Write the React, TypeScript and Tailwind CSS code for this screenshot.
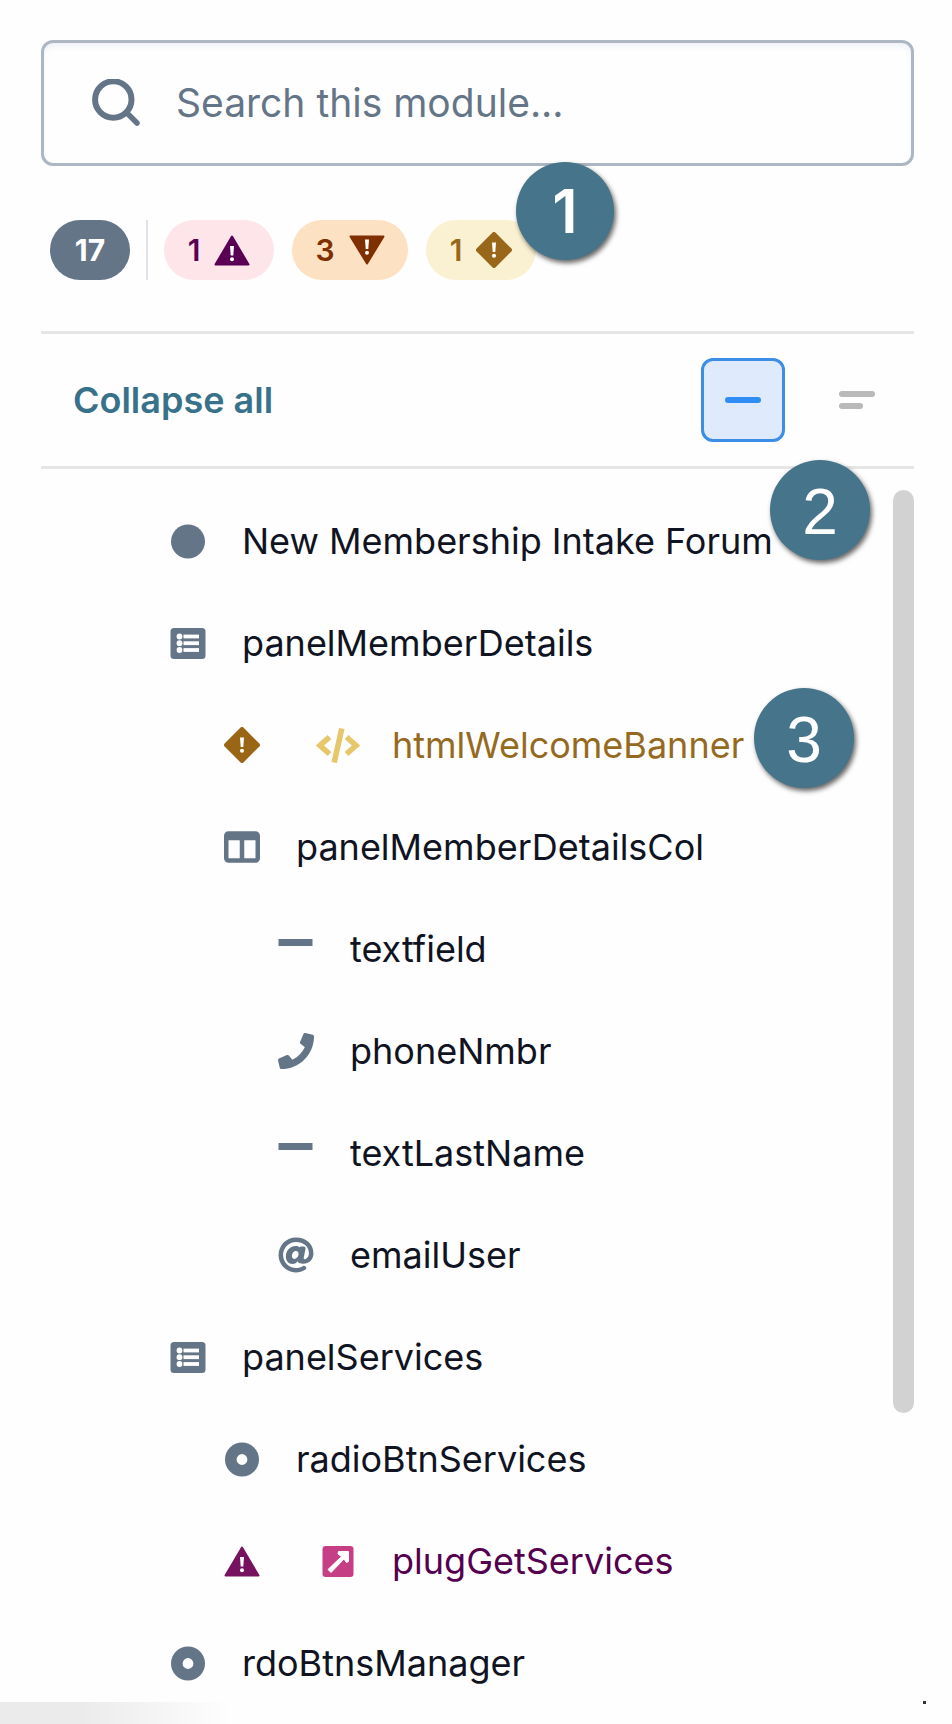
import React from "react";
import { FaAt, FaPhone } from "react-icons/fa";
import { FaTableColumns } from "react-icons/fa6";

type IconProps = { className?: string };

const Bang = ({ y = 0 }: { y?: number }) => (
  <g fill="#fff" transform={`translate(0 ${y})`}>
    <path d="M16 11h4l-.7 9.5h-2.6z" />
    <circle cx="18" cy="24.2" r="2" />
  </g>
);

const TriangleUp = ({ className }: IconProps) => (
  <svg viewBox="0 0 36 36" className={className} aria-hidden="true">
    <path
      d="M18 4.500 34.500 32.500H1.500z"
      fill="currentColor"
      stroke="currentColor"
      strokeWidth="2"
      strokeLinejoin="round"
    />
    <Bang y={3} />
  </svg>
);

const TriangleDown = ({ className }: IconProps) => (
  <svg viewBox="0 0 36 36" className={className} aria-hidden="true">
    <path
      d="M18 31.500 1.500 4.500h33z"
      fill="currentColor"
      stroke="currentColor"
      strokeWidth="2"
      strokeLinejoin="round"
    />
    <Bang y={-3.5} />
  </svg>
);

const Diamond = ({ className }: IconProps) => (
  <svg viewBox="0 0 36 36" className={className} aria-hidden="true">
    <path
      d="M18 2 34 18 18 34 2 18z"
      fill="currentColor"
      stroke="currentColor"
      strokeWidth="4"
      strokeLinejoin="round"
    />
    <Bang y={-0.5} />
  </svg>
);

const Disc = () => (
  <svg viewBox="0 0 36 36" className="size-9" aria-hidden="true">
    <circle cx="18" cy="18.500" r="17" fill="currentColor" />
  </svg>
);

const Radio = () => (
  <svg viewBox="0 0 36 36" className="size-9" aria-hidden="true">
    <circle cx="18" cy="18.500" r="11.200" fill="none" stroke="currentColor" strokeWidth="11.600" />
  </svg>
);

const Panel = () => (
  <svg viewBox="0 0 36 36" className="size-9" aria-hidden="true">
    <rect x="0.500" y="3" width="35" height="31" rx="3.500" fill="currentColor" />
    <g fill="#fff">
      <circle cx="9.500" cy="11.500" r="2.900" />
      <circle cx="9.500" cy="18.200" r="2.900" />
      <circle cx="9.500" cy="25" r="2.900" />
      <rect x="13.500" y="9.600" width="15.500" height="3.800" />
      <rect x="13.500" y="16.300" width="15.500" height="3.800" />
      <rect x="13.500" y="23.100" width="15.500" height="3.800" />
    </g>
  </svg>
);

const Dash = () => (
  <svg viewBox="0 0 36 36" className="size-9" aria-hidden="true">
    <rect x="0.500" y="8" width="34" height="7" fill="currentColor" />
  </svg>
);

const Code = () => (
  <svg viewBox="0 0 44 36" className="h-9 w-11" aria-hidden="true">
    <g fill="none" stroke="currentColor" strokeWidth="5.600">
      <path d="M13.500 10 4 18.500l9.500 8.500" />
      <path d="M30.500 10 40 18.500 30.500 27" />
      <path d="M25.800 1.500 18.200 35.500" />
    </g>
  </svg>
);

const Plug = () => (
  <svg viewBox="0 0 36 36" className="size-9" aria-hidden="true">
    <rect x="2.500" y="3" width="31" height="31" rx="3" fill="currentColor" />
    <path
      d="M18.500 8.500H28.500v10l-2 1-2.500-3.500L11 29.500 8 26.500 21.500 13.500 18 11z"
      fill="#fff"
      stroke="#fff"
      strokeLinejoin="round"
    />
  </svg>
);

type Tone = "plain" | "amber" | "plum";
type Item = {
  label: string;
  level: 0 | 1 | 2;
  icon: React.ReactNode;
  tone?: Tone;
  status?: React.ReactNode;
};

const items: Item[] = [
  { label: "New Membership Intake Forum", level: 0, icon: <Disc /> },
  { label: "panelMemberDetails", level: 0, icon: <Panel /> },
  {
    label: "htmlWelcomeBanner",
    level: 1,
    tone: "amber",
    icon: <Code />,
    status: <Diamond className="size-9 text-[#9a6514]" />,
  },
  { label: "panelMemberDetailsCol", level: 1, icon: <FaTableColumns className="size-9" /> },
  { label: "textfield", level: 2, icon: <Dash /> },
  { label: "phoneNmbr", level: 2, icon: <FaPhone className="size-9" /> },
  { label: "textLastName", level: 2, icon: <Dash /> },
  { label: "emailUser", level: 2, icon: <FaAt className="size-9" /> },
  { label: "panelServices", level: 0, icon: <Panel /> },
  { label: "radioBtnServices", level: 1, icon: <Radio /> },
  {
    label: "plugGetServices",
    level: 1,
    tone: "plum",
    icon: <Plug />,
    status: <TriangleUp className="size-9 text-[#76125f]" />,
  },
  { label: "rdoBtnsManager", level: 0, icon: <Radio /> },
];

const indent = ["pl-[129px]", "pl-[183px]", "pl-[237px]"];
const iconTone: Record<Tone, string> = {
  plain: "text-[#647587]",
  amber: "text-[#e6c76b]",
  plum: "text-[#c63f84]",
};
const textTone: Record<Tone, string> = {
  plain: "text-[#0f1322]",
  amber: "text-[#966a1e]",
  plum: "text-[#55004f]",
};

function TreeRow({ item }: { item: Item }) {
  const tone = item.tone ?? "plain";
  return (
    <li className={`flex h-[102px] items-center ${indent[item.level]}`}>
      {item.status && <span className="mr-[60px] shrink-0">{item.status}</span>}
      <span className={`mr-9 flex w-9 shrink-0 justify-center ${iconTone[tone]}`}>
        <span className="shrink-0">{item.icon}</span>
      </span>
      <span className={`text-4xl whitespace-nowrap ${textTone[tone]}`}>{item.label}</span>
    </li>
  );
}

function Callout({ n, className }: { n: number; className: string }) {
  return (
    <span
      className={`absolute flex items-center justify-center rounded-full bg-[#46748a] leading-none text-white shadow-[2px_3px_5px_rgba(0,0,0,0.6)] ${className}`}
    >
      {n}
    </span>
  );
}

function Badge({ count, className, children }: { count: number; className: string; children: React.ReactNode }) {
  return (
    <button
      type="button"
      className={`flex h-[60px] items-center justify-center gap-3.5 rounded-full text-3xl font-semibold ${className}`}
    >
      {count}
      {children}
    </button>
  );
}

export default function App() {
  return (
    <main className="relative min-h-screen overflow-hidden bg-[#fefefe] pt-10 pr-[38px] pl-[41px] font-['Inter',sans-serif]">
      <label className="flex h-[126px] items-center gap-9 rounded-xl border-3 border-[#acb7c3] px-12 shadow-[inset_0_5px_7px_-2px_#eceff6]">
        <svg viewBox="0 0 48 48" className="size-12 shrink-0 text-[#647587]" aria-hidden="true">
          <circle cx="21.300" cy="20.500" r="18.200" fill="none" stroke="currentColor" strokeWidth="6" />
          <path d="M35 34 45 44" stroke="currentColor" strokeWidth="5.500" strokeLinecap="round" />
        </svg>
        <input
          type="search"
          aria-label="Search this module"
          placeholder="Search this module..."
          className="min-w-0 flex-1 bg-transparent text-[39px] text-[#647587] outline-none placeholder:text-[#647587]"
        />
      </label>

      <div className="relative mt-[53px] flex h-[61px] items-center pl-[9px]">
        <span className="flex h-[60px] w-20 items-center justify-center rounded-full bg-[#647587] text-3xl font-bold text-white">
          17
        </span>
        <span className="mx-4 h-[60px] w-0.5 bg-[#dfe3e8]" />
        <div className="flex gap-[18px]">
          <Badge count={1} className="w-[110px] bg-[#fde5e9] text-[#5a0054]">
            <TriangleUp className="size-9" />
          </Badge>
          <Badge count={3} className="w-[116px] bg-[#fce2c2] text-[#7f2f00]">
            <TriangleDown className="size-9" />
          </Badge>
          <Badge count={1} className="w-[110px] bg-[#faf0d2] text-[#99671a]">
            <Diamond className="size-9" />
          </Badge>
        </div>
        <Callout n={1} className="-top-[57px] left-[475px] size-[98px] text-6xl font-semibold" />
      </div>

      <div className="relative mt-[51px] flex h-[138px] items-center justify-between border-y-3 border-[#e6e6e6] pr-[15px] pl-8">
        <button type="button" className="text-4xl font-semibold text-[#38728a]">
          Collapse all
        </button>
        <div className="flex gap-[30px]">
          <button
            type="button"
            aria-label="Compact view"
            className="flex size-[84px] items-center justify-center rounded-xl border-3 border-[#3b8de6] bg-[#dfebfd]"
          >
            <span className="h-1.5 w-9 rounded-full bg-[#2f8df3]" />
          </button>
          <button
            type="button"
            aria-label="Detailed view"
            className="flex size-[84px] flex-col items-start justify-center gap-1.5 pl-6"
          >
            <span className="h-1.5 w-9 rounded-full bg-[#b9b9b9]" />
            <span className="h-1.5 w-6 rounded-full bg-[#b9b9b9]" />
          </button>
        </div>
        <Callout
          n={2}
          className="top-[126px] left-[729px] size-[100px] pt-1 font-['Liberation_Sans',sans-serif] text-[64px]"
        />
      </div>

      <div className="relative flex items-start pt-[21px]">
        <ul className="min-w-0 flex-1">
          {items.map((item) => (
            <TreeRow key={item.label} item={item} />
          ))}
        </ul>
        <div className="h-[923px] w-[21px] shrink-0 rounded-full bg-[#d2d2d2]" />
        <Callout
          n={3}
          className="top-[219px] left-[713px] size-[100px] pt-1 font-['Liberation_Sans',sans-serif] text-[64px]"
        />
      </div>

      <span className="absolute bottom-0 left-0 h-[22px] w-[230px] bg-linear-to-r from-[#ebebeb] from-35% to-[#fefefe]" />
      <span className="absolute right-[26px] bottom-5 h-[3px] w-[3px] bg-[#333]" />
    </main>
  );
}
